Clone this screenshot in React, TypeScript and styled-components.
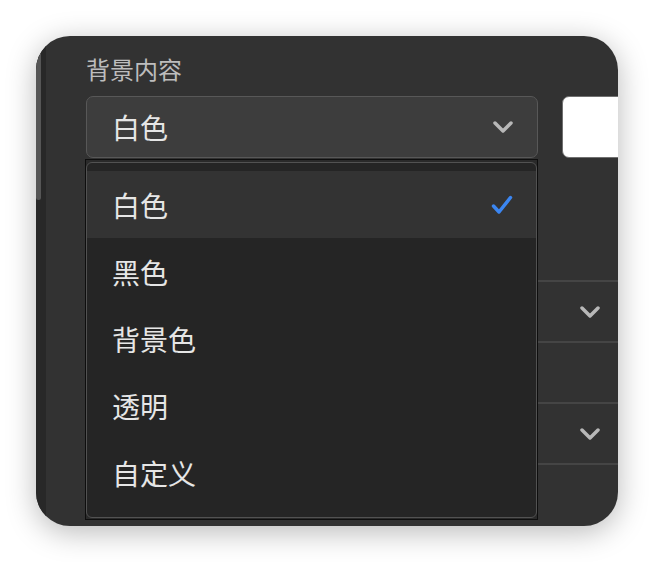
import React from 'react';
import styled, { createGlobalStyle } from 'styled-components';

const colours = {
  page: '#ffffff',
  panel: '#323232',
  gutter: '#282828',
  thumb: '#565656',
  label: '#bdbdbd',
  text: '#e6e6e6',
  field: '#3d3d3d',
  fieldBorder: '#585858',
  menu: '#252525',
  menuSelected: '#333333',
  divider: '#454545',
  chevron: '#b8b8b8',
  check: '#3b86f1',
};

const GlobalStyle = createGlobalStyle`
  html, body {
    margin: 0;
    background: ${colours.page};
  }

  body {
    font-family: "Noto Sans CJK SC", "Noto Sans", sans-serif;
  }
`;

const Page = styled.div`
  width: 654px;
  height: 562px;
  padding: 36px;
  box-sizing: border-box;
`;

const Panel = styled.div`
  display: flex;
  width: 582px;
  height: 490px;
  border-radius: 34px;
  background: ${colours.panel};
  box-shadow: 0 6px 30px rgba(0, 0, 0, 0.28);
  overflow: hidden;
`;

const Gutter = styled.div`
  width: 10px;
  flex-shrink: 0;
  background: ${colours.gutter};
`;

const Thumb = styled.div`
  width: 5px;
  height: 164px;
  border-radius: 0 0 3px 3px;
  background: ${colours.thumb};
`;

const Content = styled.div`
  display: flex;
  flex-direction: column;
  flex: 1;
  min-width: 0;
  padding: 18px 0 0 40px;

  & > * {
    flex-shrink: 0;
  }
`;

const Label = styled.div`
  margin-bottom: 12px;
  font-size: 24px;
  line-height: 30px;
  color: ${colours.label};
`;

const SelectRow = styled.div`
  display: flex;
  gap: 24px;
  height: 62px;
`;

const SelectWrap = styled.div`
  position: relative;
  width: 452px;
  flex-shrink: 0;
`;

const SelectButton = styled.div`
  display: flex;
  align-items: center;
  justify-content: space-between;
  height: 100%;
  box-sizing: border-box;
  padding: 0 24px 0 25px;
  border: 1.5px solid ${colours.fieldBorder};
  border-radius: 7px;
  background: ${colours.field};
  font-size: 28px;
  color: ${colours.text};
`;

const Swatch = styled.div`
  width: 90px;
  flex-shrink: 0;
  box-sizing: border-box;
  border: 1.5px solid #707070;
  border-radius: 7px;
  background: #ffffff;
`;

const Menu = styled.div`
  position: absolute;
  top: calc(100% + 1px);
  left: -1px;
  z-index: 2;
  display: flex;
  width: 453px;
  height: 361px;
  box-sizing: border-box;
  padding: 2px 0 1px;
  border: 1px solid #0e0e0e;
  background: #2a2a2a;
`;

const MenuInner = styled.div`
  display: flex;
  flex-direction: column;
  flex: 1;
  padding: 8px 0 9px;
  border: 1.5px solid #525252;
  border-radius: 6px;
  background: ${colours.menu};
`;

const MenuItem = styled.div<{ selected?: boolean }>`
  display: flex;
  align-items: center;
  justify-content: space-between;
  height: 67px;
  flex-shrink: 0;
  padding: 0 23px 0 25px;
  background: ${props => (props.selected ? colours.menuSelected : 'transparent')};
  font-size: 28px;
  color: ${colours.text};
`;

const Rows = styled.div`
  margin-top: 122px;
`;

const Row = styled.div`
  display: flex;
  align-items: center;
  justify-content: flex-end;
  height: 61px;
  box-sizing: border-box;
  padding-right: 18px;
  border-top: 2px solid ${colours.divider};
`;

const Chevron = () => (
  <svg width="20" height="12" viewBox="0 0 20 12">
    <polyline
      points="2,2 10,10 18,2"
      fill="none"
      stroke={colours.chevron}
      strokeWidth="3.5"
      strokeLinecap="round"
      strokeLinejoin="round"
    />
  </svg>
);

const Check = () => (
  <svg width="22" height="20" viewBox="0 0 22 20">
    <polyline
      points="2.5,11 8,17 19.5,2.5"
      fill="none"
      stroke={colours.check}
      strokeWidth="3.5"
      strokeLinecap="round"
      strokeLinejoin="round"
    />
  </svg>
);

const options = ['白色', '黑色', '背景色', '透明', '自定义'];

const App: React.FunctionComponent = () => {
  const selected = '白色';

  return (
    <Page>
      <GlobalStyle />
      <Panel>
        <Gutter>
          <Thumb />
        </Gutter>
        <Content>
          <Label>背景内容</Label>
          <SelectRow>
            <SelectWrap>
              <SelectButton>
                <span>{selected}</span>
                <Chevron />
              </SelectButton>
              <Menu>
                <MenuInner>
                  {options.map(option => (
                    <MenuItem key={option} selected={option === selected}>
                      <span>{option}</span>
                      {option === selected && <Check />}
                    </MenuItem>
                  ))}
                </MenuInner>
              </Menu>
            </SelectWrap>
            <Swatch />
          </SelectRow>
          <Rows>
            <Row>
              <Chevron />
            </Row>
            <Row />
            <Row>
              <Chevron />
            </Row>
            <Row />
          </Rows>
        </Content>
      </Panel>
    </Page>
  );
};

export default App;
